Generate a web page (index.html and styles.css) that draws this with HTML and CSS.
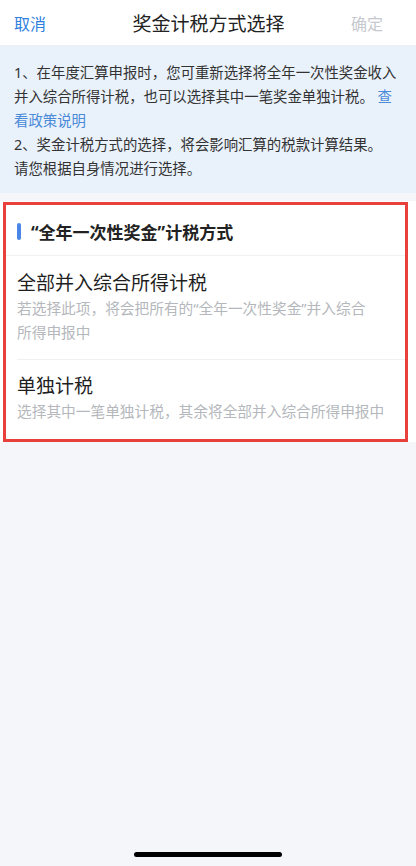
FILE: index.html
```html
<!DOCTYPE html>
<html lang="zh-CN">
<head>
    <meta charset="UTF-8">
    <meta name="viewport" content="width=device-width, initial-scale=1.0">
    <title>奖金计税方式选择</title>
    <link rel="stylesheet" href="styles.css">
</head>
<body>
    <header class="nav">
        <span class="nav-btn cancel">取消</span>
        <h1 class="nav-title">奖金计税方式选择</h1>
        <span class="nav-btn confirm">确定</span>
    </header>

    <div class="notice">
        <p>1、在年度汇算申报时，您可重新选择将全年一次性奖金收入并入综合所得计税，也可以选择其中一笔奖金单独计税。 <a class="link">查看政策说明</a></p>
        <p>2、奖金计税方式的选择，将会影响汇算的税款计算结果。<br>请您根据自身情况进行选择。</p>
    </div>

    <section class="panel">
        <div class="frame">
            <div class="section-head">
                <span class="bar"></span>
                <h2>“全年一次性奖金”计税方式</h2>
            </div>
            <div class="option">
                <div class="option-title">全部并入综合所得计税</div>
                <div class="option-desc">若选择此项，将会把所有的“全年一次性奖金”并入综合<br>所得申报中</div>
            </div>
            <div class="option">
                <div class="option-title">单独计税</div>
                <div class="option-desc">选择其中一笔单独计税，其余将全部并入综合所得申报中</div>
            </div>
        </div>
    </section>

    <div class="home-bar"></div>
</body>
</html>
```

FILE: styles.css
```css
html, body {
    height: 100%;
}

body {
    margin: 0;
    padding: 0;
    background-color: #f5f6fa;
    font-family: "Noto Sans", "Noto Sans CJK SC", sans-serif;
    color: #222;
    position: relative;
}

.nav {
    height: 46px;
    background: #fff;
    display: flex;
    align-items: center;
    justify-content: space-between;
    padding: 0 33px 0 14px;
    box-sizing: border-box;
    border-bottom: 1px solid #eef0f3;
}

.nav-title {
    margin: 0;
    font-size: 19px;
    font-weight: normal;
    color: #222;
    padding-left: 20px;
}

.nav-btn {
    font-size: 16px;
}

.cancel {
    color: #2f7fe0;
}

.confirm {
    color: #c6c9ce;
}

.notice {
    background-color: #e9f1fb;
    padding: 15px 14px 12px 14px;
    font-size: 14.4px;
    line-height: 24px;
    color: #333;
}

.notice p {
    margin: 0;
}

.link {
    color: #4a8ad8;
}

.panel {
    background: #fff;
    margin-top: 8px;
    padding-top: 1px;
}

.frame {
    border: 3.5px solid #e8403b;
    margin: 0 8px 0 3px;
}

.section-head {
    display: flex;
    align-items: center;
    height: 51px;
    padding-top: 3px;
    box-sizing: border-box;
    border-bottom: 1px solid #f0f1f3;
    padding-left: 11px;
}

.bar {
    width: 4px;
    height: 17px;
    border-radius: 2px;
    background: #4a86e8;
    margin-right: 10px;
}

.section-head h2 {
    margin: 0;
    font-size: 17px;
    font-weight: bold;
    color: #222;
}

.option {
    margin-left: 11px;
    padding: 14px 10px 15px 0;
}

.option + .option {
    border-top: 1px solid #eef0f2;
    padding-top: 13px;
    padding-bottom: 15.5px;
}

.option-title {
    font-size: 19px;
    line-height: 26px;
    color: #1f1f1f;
}

.option-desc {
    font-size: 14.7px;
    line-height: 24px;
    color: #b4b7bc;
    white-space: nowrap;
}

.home-bar {
    position: absolute;
    left: 134px;
    bottom: 9px;
    width: 148px;
    height: 5px;
    border-radius: 3px;
    background: #000;
}
```
